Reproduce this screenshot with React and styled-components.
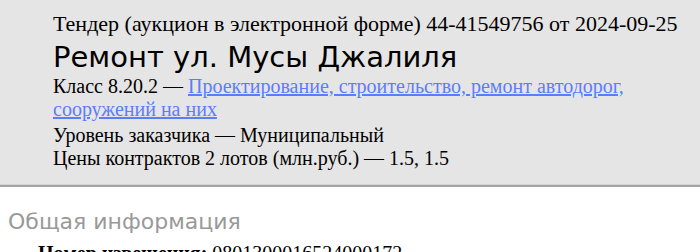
import React from "react";
import styled, { createGlobalStyle } from "styled-components";

const Global = createGlobalStyle`
  html, body { margin: 0; padding: 0; background: #fff; }
  body { font-family: "Liberation Serif", "Times New Roman", serif; font-size: 20px; color: #000; }
`;

const Header = styled.header`
  background: #e5e5e5;
  border-bottom: 2px solid #a3a3a3;
  box-shadow: inset 0 -1px 0 #d4d4d4;
  padding: 11px 20px 15px 53px;
`;

const Line = styled.div`
  font-size: ${(p) => (p.$big ? "22px" : "20px")};
  line-height: ${(p) => (p.$big ? "25px" : "23px")};
  margin-bottom: ${(p) => (p.$gap ? "3px" : "0")};
`;

const Title = styled.h1`
  margin: 4px 0 1px;
  font-family: "DejaVu Sans", Verdana, sans-serif;
  font-weight: normal;
  font-size: 29px;
  line-height: 34px;
  color: #000;
`;

const Link = styled.a`
  color: #5a7dff;
  text-decoration: underline;
`;

const Main = styled.main`
  padding: 0 8px;
`;

const SectionTitle = styled.h2`
  margin: 21px 0 6px;
  font-family: "DejaVu Sans", Verdana, sans-serif;
  font-weight: normal;
  font-size: 22px;
  line-height: 28px;
  color: #999;
`;

const Field = styled.div`
  padding-left: 30px;
  font-size: 20px;
  line-height: 23px;
`;

export default function App() {
  return (
    <>
      <Global />
      <Header>
        <Line $big>Тендер (аукцион в электронной форме) 44-41549756 от 2024-09-25</Line>
        <Title>Ремонт ул. Мусы Джалиля</Title>
        <Line $gap>
          Класс 8.20.2 — <Link href="#">Проектирование, строительство, ремонт автодорог, сооружений на них</Link>
        </Line>
        <Line>Уровень заказчика — Муниципальный</Line>
        <Line>Цены контрактов 2 лотов (млн.руб.) — 1.5, 1.5</Line>
      </Header>
      <Main>
        <SectionTitle>Общая информация</SectionTitle>
        <Field><b>Номер извещения:</b> 0801300016524000172</Field>
      </Main>
    </>
  );
}
